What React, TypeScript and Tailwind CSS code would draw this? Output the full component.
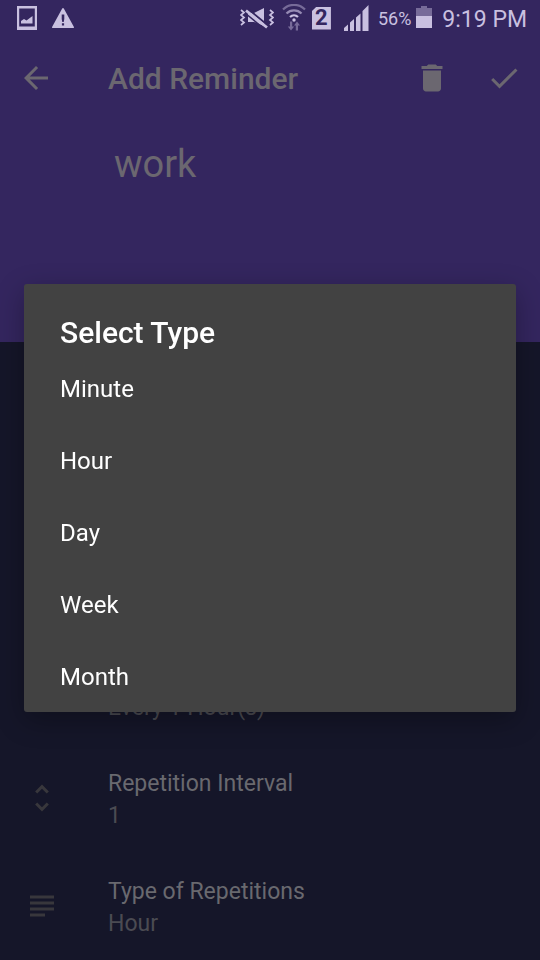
import { useState } from "react";
import type { ReactNode } from "react";

const repeatTypes = ["Minute", "Hour", "Day", "Week", "Month"];

function StatusBar() {
  return (
    <div className="flex h-9 items-center justify-between pr-[13px] pl-4 text-[#c9c0e0]">
      <div className="flex items-center gap-3.5">
        <svg className="h-6 w-[22px]" viewBox="0 0 22 24" fill="currentColor" aria-hidden="true">
          <path fillRule="evenodd" d="M1 0h20v24H1zM3.200 2.500v18h15.600v-18z" />
          <path d="M5 17.500V15l3-2 2.500 1.500 6-4.500v7.500z" />
        </svg>
        <svg className="h-[22px] w-[22px]" viewBox="0 0 22 22" fill="currentColor" aria-hidden="true">
          <path
            fillRule="evenodd"
            d="M10.200 1.500q.8-1.200 1.600 0l10 18.300q.5 1.200-.7 1.200H.9q-1.200 0-.7-1.200zM9.700 7.500v4.500l.6 3h1.400l.6-3V7.500zM9.900 16.200v2.200h2.200v-2.200z"
          />
        </svg>
      </div>

      <div className="flex items-center">
        {/* vibrate / muted */}
        <svg className="h-6 w-[34px]" viewBox="0 0 34 24" fill="none" stroke="currentColor" aria-hidden="true">
          <path d="M8 7h6l10-5v18l-10-4H8z" fill="currentColor" stroke="none" />
          <path d="M8 3l20 16.500" stroke="#34265f" strokeWidth="2" />
          <path d="M6 4.500l21 17" strokeWidth="2.800" />
          <path d="M5 7l20 16.500" stroke="#34265f" strokeWidth="1.500" />
          <path d="M1 4l3 2.500-3 2.500 3 2.500-3 2.500 3 2.500-3 2.500" strokeWidth="1.700" />
          <path d="M30 4l3 2.500-3 2.500 3 2.500-3 2.500 3 2.500-3 2.500" strokeWidth="1.700" />
        </svg>
        <svg className="ml-2 h-7 w-6" viewBox="0 0 24 28" fill="none" stroke="currentColor" aria-hidden="true">
          <path d="M1 5.500a15.500 15.500 0 0 1 22 0" strokeWidth="2.200" opacity=".45" />
          <path d="M4.500 9.500a10.500 10.500 0 0 1 15 0" strokeWidth="2.200" opacity=".65" />
          <path d="M8 13a5.800 5.800 0 0 1 8 0" strokeWidth="2.200" />
          <circle cx="12" cy="16" r="1.700" fill="currentColor" stroke="none" />
          <g fill="currentColor" stroke="none" opacity=".45">
            <path d="M8 17.500h2.200v5h2L9 26.500l-3.200-4H8z" />
            <path d="M13.800 26.500H16v-5h2l-3-4-3 4h1.800z" />
          </g>
        </svg>
        <span className="ml-1.5 flex h-[23px] w-[19px] items-center justify-center bg-[#c9c0e0] text-[22px] leading-6 font-bold text-[#34265f] [clip-path:polygon(25%_0,100%_0,100%_100%,0_100%,0_20%)]">
          2
        </span>
        <svg className="ml-3 h-[26px] w-[26px]" viewBox="0 0 26 26" fill="currentColor" aria-hidden="true">
          <path d="M1 26v-3l4-3.500V26zM7 26v-8.500l4-3.500v12zM13 26V12.500L17.500 8.500V26zM19.500 26V6L25.500 0v26z" />
        </svg>
        <span className="ml-[9px] pt-0.5 text-[18px] leading-6">56%</span>
        <svg className="ml-[5px] h-6 w-4" viewBox="0 0 16 24" fill="currentColor" aria-hidden="true">
          <path d="M5 0h6v2h5v8H0V2h5z" opacity=".45" />
          <path d="M0 10h16v12H0z" />
        </svg>
        <span className="ml-2.5 pt-1 text-[23px] leading-8">9:19 PM</span>
      </div>
    </div>
  );
}

function SettingRow({ icon, label, value }: { icon?: ReactNode; label?: string; value: string }) {
  return (
    <button type="button" className="flex h-[106px] w-full items-center text-left text-[23px] leading-8">
      <span className="flex w-[84px] shrink-0 justify-center pb-0.5 text-[#38373c]">{icon}</span>
      <span className="flex flex-col justify-end pt-0.5 pl-6">
        <span className="min-h-8 text-[#69696f]">{label}</span>
        <span className="text-[#4b4b52]">{value}</span>
      </span>
    </button>
  );
}

function TypeDialog({ onSelect }: { onSelect: (type: string) => void }) {
  return (
    <div className="fixed inset-0 z-10 flex items-center justify-center px-6 pt-9">
      <div
        role="dialog"
        aria-modal="true"
        aria-labelledby="type-title"
        className="w-full rounded-[3px] bg-[#424242] text-white shadow-[0_8px_28px_rgba(0,0,0,0.3)]"
      >
        <h2 id="type-title" className="px-9 pt-[33px] pb-[3px] text-[30px] leading-8 font-medium">
          Select Type
        </h2>
        <ul>
          {repeatTypes.map((type) => (
            <li key={type}>
              <button
                type="button"
                onClick={() => onSelect(type)}
                className="flex h-[72px] w-full items-center px-9 pt-0.5 text-left text-[24px] leading-8"
              >
                {type}
              </button>
            </li>
          ))}
        </ul>
      </div>
    </div>
  );
}

export default function App() {
  const [title, setTitle] = useState("work");
  const [repeatType, setRepeatType] = useState("Hour");
  const [open, setOpen] = useState(true);

  const handleSelect = (type: string) => {
    setRepeatType(type);
    setOpen(false);
  };

  return (
    <div className="flex min-h-screen flex-col bg-[#151629] font-[Roboto,sans-serif]">
      <header className="h-[342px] bg-[#34265f] text-[#6b6770]">
        <StatusBar />
        <div className="flex h-[84px] items-center px-[18px]">
          <button type="button" aria-label="Back">
            <svg className="h-9 w-9" viewBox="0 0 24 24" fill="currentColor">
              <path d="M20 11H7.830l5.590-5.590L12 4l-8 8 8 8 1.410-1.410L7.830 13H20v-2z" />
            </svg>
          </button>
          <h1 className="grow pt-0.5 pl-[54px] text-[30px] leading-9 font-medium">Add Reminder</h1>
          <button type="button" aria-label="Delete">
            <svg className="h-9 w-9" viewBox="0 0 24 24" fill="currentColor">
              <path d="M6 19c0 1.100.9 2 2 2h8c1.100 0 2-.9 2-2V7H6v12zM19 4h-3.500l-1-1h-5l-1 1H5v2h14V4z" />
            </svg>
          </button>
          <button type="button" aria-label="Save" className="ml-9">
            <svg className="h-9 w-9" viewBox="0 0 24 24" fill="currentColor">
              <path d="M9 16.170L4.830 12l-1.420 1.410L9 19 21 7l-1.410-1.410z" />
            </svg>
          </button>
        </div>
        <div className="pt-5 pr-6 pl-[114px]">
          <input
            type="text"
            aria-label="Reminder title"
            value={title}
            onChange={(e) => setTitle(e.target.value)}
            className="w-full bg-transparent text-[38px] leading-[48px] outline-none"
          />
        </div>
      </header>

      <main className="flex grow flex-col justify-end gap-0.5">
        <SettingRow value={`Every 1 ${repeatType}(s)`} />
        <SettingRow
          label="Repetition Interval"
          value="1"
          icon={
            <svg className="h-9 w-9" viewBox="0 0 24 24" fill="currentColor" aria-hidden="true">
              <path d="M12 5.830L15.170 9l1.410-1.410L12 3 7.410 7.590 8.830 9 12 5.830zm0 12.340L8.830 15l-1.410 1.410L12 21l4.590-4.590L15.170 15 12 18.170z" />
            </svg>
          }
        />
        <SettingRow
          label="Type of Repetitions"
          value={repeatType}
          icon={
            <svg className="h-9 w-9" viewBox="0 0 24 24" fill="currentColor" aria-hidden="true">
              <path d="M4 5h16v2H4zM4 9h16v2H4zM4 13h16v2H4zM4 17h10v2H4z" />
            </svg>
          }
        />
      </main>

      {open && <TypeDialog onSelect={handleSelect} />}
    </div>
  );
}
